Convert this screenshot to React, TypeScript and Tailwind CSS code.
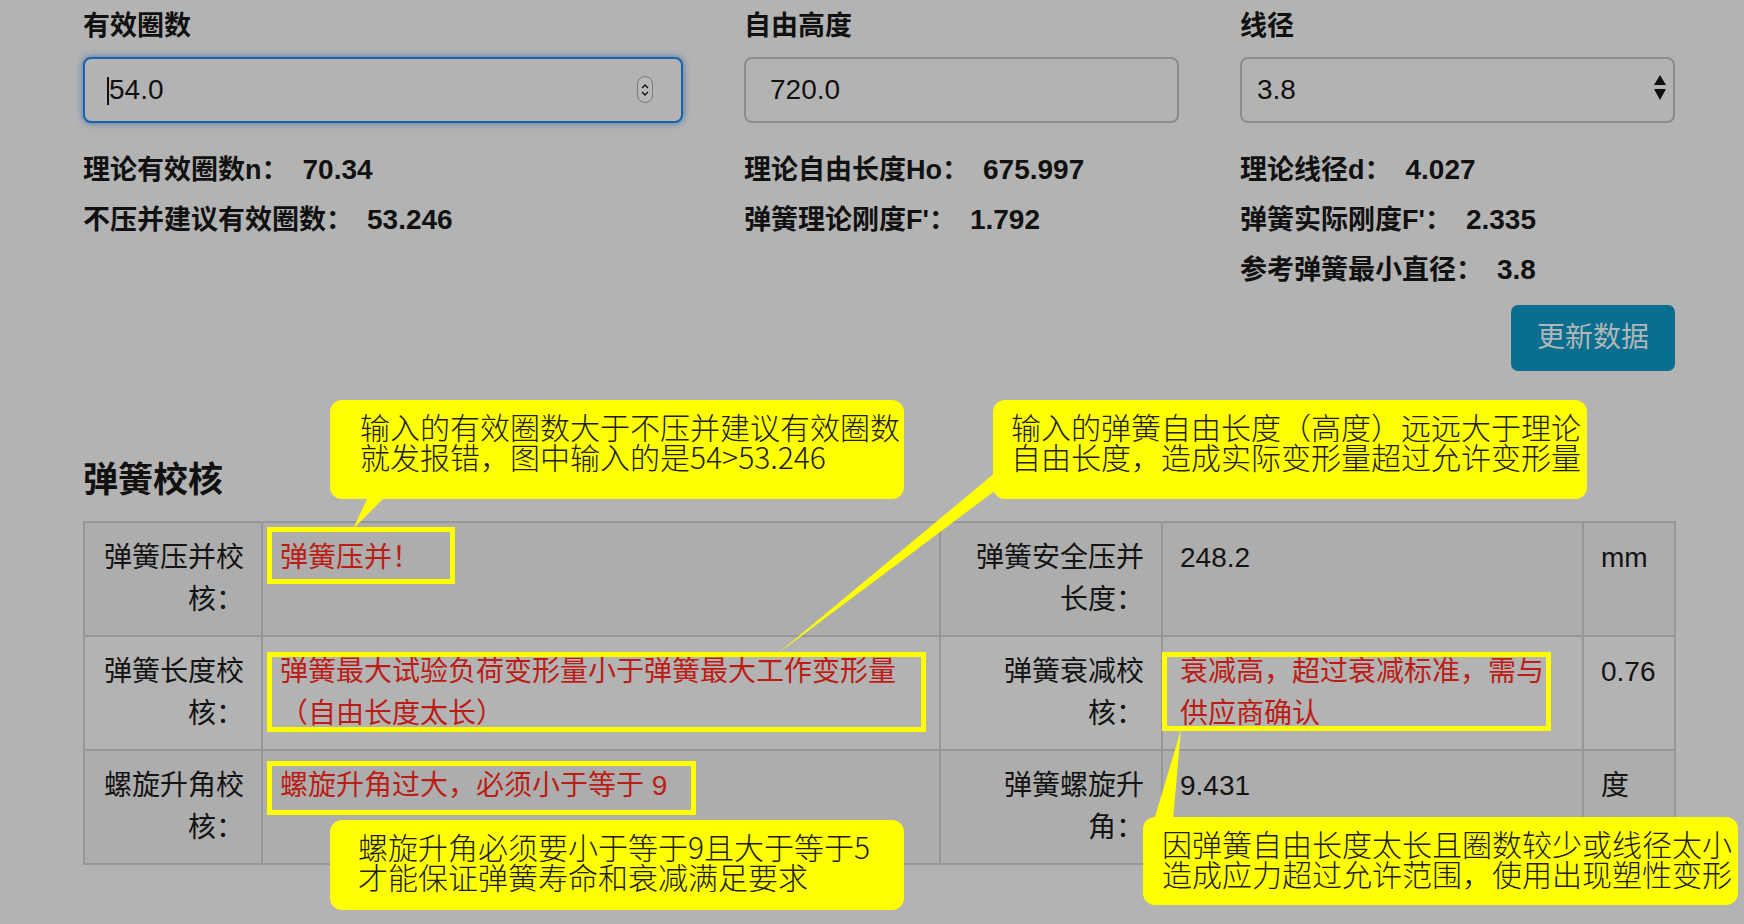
import { ReactNode } from 'react';

type IStat = { label: string; value: string };

const stats1: IStat[] = [
  { label: '理论有效圈数n：', value: '70.34' },
  { label: '不压并建议有效圈数：', value: '53.246' },
];
const stats2: IStat[] = [
  { label: '理论自由长度Ho：', value: '675.997' },
  { label: '弹簧理论刚度F\'：', value: '1.792' },
];
const stats3: IStat[] = [
  { label: '理论线径d：', value: '4.027' },
  { label: '弹簧实际刚度F\'：', value: '2.335' },
  { label: '参考弹簧最小直径：', value: '3.8' },
];

function StatList({ items }: { items: IStat[] }) {
  return (
    <div className="mt-[22px] flex flex-col">
      {items.map((s) => (
        <div key={s.label} className="text-[27px] font-bold leading-[50px] text-[#111]">
          <span>{s.label}</span>
          <span className="ml-[14px] text-[28px]">{s.value}</span>
        </div>
      ))}
    </div>
  );
}

function FieldLabel({ children }: { children: ReactNode }) {
  return <div className="text-[27px] font-bold leading-[36px] text-[#111]">{children}</div>;
}

function Spinner() {
  return (
    <span className="absolute right-[30px] top-[19px] flex h-[27px] w-[16px] flex-col items-center justify-center rounded-full border border-[#7a7a7a] bg-[#b8b8b8]">
      <svg width="8" height="6" viewBox="0 0 8 6">
        <path d="M1 5 L4 2 L7 5" fill="none" stroke="#111" strokeWidth="1.4" />
      </svg>
      <svg width="8" height="6" viewBox="0 0 8 6" className="mt-[2px]">
        <path d="M1 1 L4 4 L7 1" fill="none" stroke="#111" strokeWidth="1.4" />
      </svg>
    </span>
  );
}

type IRow = {
  label1: string;
  value1: string;
  label2: string;
  value2: string;
  unit: string;
  red1?: boolean;
  red2?: boolean;
};

const rows: IRow[] = [
  { label1: '弹簧压并校核：', value1: '弹簧压并！', red1: true, label2: '弹簧安全压并长度：', value2: '248.2', unit: 'mm' },
  {
    label1: '弹簧长度校核：',
    value1: '弹簧最大试验负荷变形量小于弹簧最大工作变形量（自由长度太长）',
    red1: true,
    label2: '弹簧衰减校核：',
    value2: '衰减高，超过衰减标准，需与供应商确认',
    red2: true,
    unit: '0.76',
  },
  { label1: '螺旋升角校核：', value1: '螺旋升角过大，必须小于等于 9', red1: true, label2: '弹簧螺旋升角：', value2: '9.431', unit: '度' },
];

function CheckTable() {
  return (
    <table className="mt-[21px] w-[1591px] table-fixed border-collapse border-2 border-[#979797] text-[28px] leading-[42px] text-[#141414]">
      <colgroup>
        <col className="w-[178px]" />
        <col className="w-[678px]" />
        <col className="w-[222px]" />
        <col className="w-[421px]" />
        <col className="w-[92px]" />
      </colgroup>
      <tbody>
        {rows.map((r, i) => (
          <tr key={r.label1} className={i % 2 === 0 ? 'bg-[#adadad]' : ''}>
            <td className="border-2 border-[#979797] px-[17px] py-[14px] text-right align-top">{r.label1}</td>
            <td className={`border-2 border-[#979797] px-[17px] py-[14px] align-top ${r.red1 ? 'text-[#bb1d16]' : ''}`}>
              {r.value1}
            </td>
            <td className="border-2 border-[#979797] px-[17px] py-[14px] text-right align-top">{r.label2}</td>
            <td className={`border-2 border-[#979797] px-[17px] py-[14px] align-top ${r.red2 ? 'text-[#bb1d16]' : ''}`}>
              {r.value2}
            </td>
            <td className="border-2 border-[#979797] px-[17px] py-[14px] align-top">{r.unit}</td>
          </tr>
        ))}
      </tbody>
    </table>
  );
}

type INote = { left: number; top: number; width: number; height: number; pl: number; lines: string[] };

function Annotations() {
  const notes: INote[] = [
    { left: 330, top: 400, width: 574, height: 99, pl: 30, lines: ['输入的有效圈数大于不压并建议有效圈数', '就发报错，图中输入的是54>53.246'] },
    { left: 993, top: 400, width: 594, height: 99, pl: 18, lines: ['输入的弹簧自由长度（高度）远远大于理论', '自由长度，造成实际变形量超过允许变形量'] },
    { left: 330, top: 820, width: 574, height: 90, pl: 28, lines: ['螺旋升角必须要小于等于9且大于等于5', '才能保证弹簧寿命和衰减满足要求'] },
    { left: 1143, top: 817, width: 595, height: 88, pl: 19, lines: ['因弹簧自由长度太长且圈数较少或线径太小', '造成应力超过允许范围，使用出现塑性变形'] },
  ];
  const boxes = [
    { left: 267, top: 527, width: 188, height: 57 },
    { left: 267, top: 652, width: 659, height: 80 },
    { left: 267, top: 761, width: 429, height: 54 },
    { left: 1162, top: 652, width: 389, height: 79 },
  ];
  return (
    <div className="pointer-events-none absolute inset-0">
      {boxes.map((b, i) => (
        <div
          key={i}
          className="absolute border-[5px] border-[#ffff00]"
          style={{ left: b.left, top: b.top, width: b.width, height: b.height }}
        />
      ))}
      <svg className="absolute left-0 top-0" width="1744" height="924" viewBox="0 0 1744 924">
        <polygon points="368,497 385,497 353,529" fill="#ffff00" />
        <polygon points="996,472 996,490 776,655" fill="#ffff00" />
        <polygon points="1181,730 1154,820 1173,820" fill="#ffff00" />
      </svg>
      {notes.map((n, i) => (
        <div
          key={i}
          className="absolute rounded-[12px] bg-[#ffff00] pt-[11px] font-['Noto_Sans_CJK_SC',sans-serif] text-[30px] font-light leading-[30px] whitespace-nowrap text-[#1c1c1c]"
          style={{ left: n.left, top: n.top, width: n.width, height: n.height, paddingLeft: n.pl }}
        >
          {n.lines.map((l) => (
            <div key={l}>{l}</div>
          ))}
        </div>
      ))}
    </div>
  );
}

export default function App() {
  return (
    <div className="relative h-[924px] w-[1744px] overflow-hidden bg-[#b3b3b3] font-['Liberation_Sans','Noto_Sans_CJK_SC',sans-serif]">
      <div className="w-[1675px] pl-[83px]">
        <div className="grid grid-cols-[600px_435px_435px] gap-x-[61px] pt-[8px]">
          <div className="flex flex-col">
            <FieldLabel>有效圈数</FieldLabel>
            <div className="relative mt-[13px] h-[66px]">
              <input
                defaultValue="54.0"
                className="h-full w-full rounded-[8px] border-2 border-[#1a62ad] bg-[#b3b3b3] pl-[24px] text-[28px] text-[#111] shadow-[0_0_7px_rgba(20,90,170,0.7)] outline-none"
              />
              <span className="absolute left-[24px] top-[20px] h-[28px] w-[2px] bg-[#111]" />
              <Spinner />
            </div>
            <StatList items={stats1} />
          </div>
          <div className="flex flex-col">
            <FieldLabel>自由高度</FieldLabel>
            <input
              defaultValue="720.0"
              className="mt-[13px] h-[66px] w-full rounded-[8px] border-2 border-[#8c8c8c] bg-[#b3b3b3] pl-[24px] text-[28px] text-[#111] outline-none"
            />
            <StatList items={stats2} />
          </div>
          <div className="flex flex-col">
            <FieldLabel>线径</FieldLabel>
            <div className="relative mt-[13px] h-[66px]">
              <select
                defaultValue="3.8"
                className="h-full w-full appearance-none rounded-[8px] border-2 border-[#8c8c8c] bg-[#b3b3b3] pl-[15px] text-[28px] text-[#111] outline-none"
              >
                <option value="3.8">3.8</option>
              </select>
              <svg className="absolute right-[8px] top-[18px]" width="14" height="26" viewBox="0 0 14 26">
                <polygon points="7,0 13,10 1,10" fill="#111" />
                <polygon points="1,14 13,14 7,25" fill="#111" />
              </svg>
            </div>
            <StatList items={stats3} />
            <div className="mt-[10px] flex justify-end">
              <button className="h-[66px] w-[164px] rounded-[7px] bg-[#0a6e8f] text-[28px] text-[#b1b6b8]">
                更新数据
              </button>
            </div>
          </div>
        </div>
        <div className="mt-[89px] text-[35px] font-bold leading-[40px] text-[#111]">弹簧校核</div>
        <CheckTable />
      </div>
      <Annotations />
    </div>
  );
}
